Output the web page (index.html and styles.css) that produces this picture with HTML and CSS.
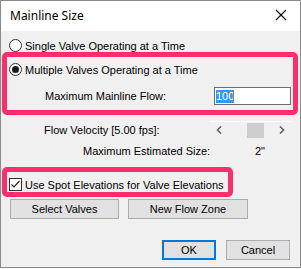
FILE: index.html
```html
<!DOCTYPE html>
<html>
<head>
<meta charset="utf-8">
<link rel="stylesheet" href="styles.css">
</head>
<body>
<div class="window">
  <div class="titlebar">
    <span class="title">Mainline Size</span>
    <svg class="close" width="12" height="12" viewBox="0 0 12 12"><path d="M1 1 L11 11 M11 1 L1 11" stroke="#000" stroke-width="1.1" fill="none"/></svg>
  </div>
  <div class="content">
    <div class="row row1">
      <span class="radio"></span>
      <span class="label">Single Valve Operating at a Time</span>
    </div>
    <div class="hl hl1">
      <div class="row row2">
        <span class="radio checked"></span>
        <span class="label">Multiple Valves Operating at a Time</span>
      </div>
      <div class="flowrow">
        <span class="flowlabel">Maximum Mainline Flow:</span>
        <span class="input"><span class="sel">100</span><span class="caret"></span></span>
      </div>
    </div>
    <div class="velrow">
      <span class="vellabel">Flow Velocity [5.00 fps]:</span>
      <div class="scroll">
        <svg class="arrow" width="6" height="8" viewBox="0 0 6 8"><path d="M5 0.5 L1.5 4 L5 7.5" stroke="#606060" stroke-width="1.6" fill="none"/></svg>
        <span class="thumb"></span>
        <svg class="arrow" width="6" height="8" viewBox="0 0 6 8"><path d="M1 0.5 L4.5 4 L1 7.5" stroke="#606060" stroke-width="1.6" fill="none"/></svg>
      </div>
    </div>
    <div class="sizerow">
      <span class="sizelabel">Maximum Estimated Size:</span>
      <span class="sizeval">2"</span>
    </div>
    <div class="hl hl2">
      <div class="row row3">
        <span class="check"><svg width="11" height="11" viewBox="0 0 11 11"><path d="M1.5 5.5 L4 8 L9.5 2" stroke="#222" stroke-width="1.2" fill="none"/></svg></span>
        <span class="label">Use Spot Elevations for Valve Elevations</span>
      </div>
    </div>
    <div class="btnrow">
      <button class="btn b-select">Select Valves</button>
      <button class="btn b-zone">New Flow Zone</button>
    </div>
    <div class="okrow">
      <button class="btn b-ok">OK</button>
      <button class="btn b-cancel">Cancel</button>
    </div>
  </div>
</div>
</body>
</html>
```

FILE: styles.css
```css
html, body {
  margin: 0;
  padding: 0;
  background: #fff;
}
.window {
  box-sizing: border-box;
  width: 301px;
  height: 268px;
  border: 1px solid #8a8a8a;
  display: flex;
  flex-direction: column;
  font-family: "Liberation Sans", Arial, sans-serif;
  font-size: 11px;
  color: #000;
}
.titlebar {
  height: 30px;
  background: #fff;
  display: flex;
  align-items: center;
  justify-content: space-between;
  padding: 0 13px 0 9px;
  flex: none;
}
.title {
  font-family: "Noto Sans", "Open Sans", sans-serif;
  font-size: 12px;
  margin-top: -1px;
}
.close {
  margin-top: -2px;
}
.content {
  flex: 1;
  background: #f0f0f0;
  display: flex;
  flex-direction: column;
}
.row {
  display: flex;
  align-items: center;
  height: 13px;
}
.row1 {
  margin-top: 8px;
  padding-left: 8px;
}
.radio {
  box-sizing: border-box;
  width: 13px;
  height: 13px;
  border: 1px solid #333;
  border-radius: 50%;
  background: #fff;
  display: inline-flex;
  align-items: center;
  justify-content: center;
  flex: none;
}
.radio.checked::after {
  content: "";
  width: 7px;
  height: 7px;
  border-radius: 50%;
  background: #1a1a1a;
}
.label {
  margin-left: 3px;
  white-space: nowrap;
}
.hl {
  box-sizing: border-box;
  border: 5px solid #fe2e6e;
  border-radius: 5px;
  margin-left: 1px;
}
.hl1 {
  width: 296px;
  height: 63px;
}
.row2 {
  margin-top: 6px;
  padding-left: 2px;
}
.flowrow {
  display: flex;
  align-items: center;
  height: 18px;
  margin-top: 11px;
}
.flowlabel {
  width: 207px;
  padding-left: 38px;
  box-sizing: border-box;
  flex: none;
}
.input {
  box-sizing: border-box;
  width: 77px;
  height: 18px;
  border: 1px solid #6e6e6e;
  background: #fff;
  display: flex;
  align-items: center;
  padding-left: 1px;
}
.sel {
  background: #3399ff;
  color: #fff;
  height: 13px;
  line-height: 13px;
  width: 17px;
}
.caret {
  width: 1px;
  height: 13px;
  background: #d06a10;
}
.velrow {
  display: flex;
  align-items: center;
  height: 17px;
  margin-top: 6px;
}
.vellabel {
  width: 209px;
  padding-left: 43px;
  padding-top: 1px;
  box-sizing: border-box;
  flex: none;
}
.scroll {
  box-sizing: border-box;
  width: 81px;
  height: 17px;
  border-top: 1px solid #fbfbfb;
  display: flex;
  align-items: center;
  justify-content: space-between;
  padding: 0 6px 0 6px;
}
.thumb {
  width: 17px;
  height: 15px;
  background: #cdcdcd;
  margin-left: 9px;
}
.sizerow {
  display: flex;
  align-items: center;
  height: 14px;
  margin-top: 6px;
}
.sizelabel {
  width: 254px;
  padding-left: 82px;
  box-sizing: border-box;
  flex: none;
}
.hl2 {
  width: 231px;
  height: 30px;
  margin-top: 9px;
}
.row3 {
  margin-top: 6px;
  padding-left: 2px;
}
.check {
  box-sizing: border-box;
  width: 13px;
  height: 13px;
  border: 1px solid #333;
  background: #fff;
  display: inline-flex;
  align-items: center;
  justify-content: center;
  flex: none;
}
.btnrow {
  display: flex;
  gap: 9px;
  margin-top: 2px;
  padding-left: 9px;
}
.btn {
  box-sizing: border-box;
  height: 20px;
  background: #e1e1e1;
  border: 1px solid #adadad;
  font-family: "Liberation Sans", Arial, sans-serif;
  font-size: 11px;
  color: #000;
  padding: 0;
  margin: 0;
}
.b-select { width: 109px; }
.b-zone { width: 120px; }
.okrow {
  display: flex;
  justify-content: flex-end;
  gap: 10px;
  margin-top: 21px;
  padding-right: 10px;
}
.b-ok {
  width: 54px;
  border: 2px solid #0078d7;
}
.b-cancel { width: 64px; }
```
